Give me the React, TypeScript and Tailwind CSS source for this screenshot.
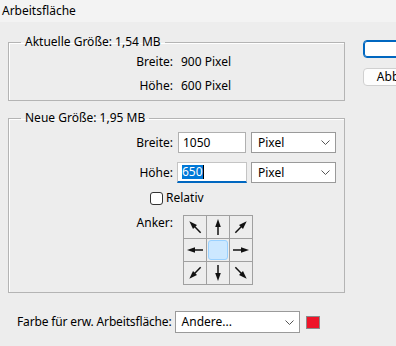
import React from "react";

const FONT = "font-['Noto_Sans',sans-serif]";

function Chevron() {
    return (
        <svg width="9" height="5" viewBox="0 0 9 5" className="shrink-0">
            <polyline points="0.5,0.5 4.5,4.5 8.5,0.5" fill="none" stroke="#555" strokeWidth="1" />
        </svg>
    );
}

function Select({ value, w }: { value: string; w: string }) {
    return (
        <div
            className={`${w} h-[21px] bg-white border border-[#9a9a9a] flex items-center justify-between pl-[6px] pr-[5px]`}
        >
            <span>{value}</span>
            <Chevron />
        </div>
    );
}

function Arrow({ rot }: { rot: number }) {
    return (
        <svg width="22" height="22" viewBox="0 0 22 22">
            <g transform={`rotate(${rot} 11 11)`}>
                <line x1="11" y1="19" x2="11" y2="9" stroke="#111" strokeWidth="1.5" />
                <polygon points="11,3 8.2,11 13.8,11" fill="#111" />
            </g>
        </svg>
    );
}

function AnchorGrid() {
    const rots: (number | null)[] = [-45, 0, 45, -90, null, 90, -135, 180, 135];
    return (
        <div className="grid grid-cols-[22px_22px_22px] grid-rows-[22px_22px_22px] gap-px p-px bg-[#a0a0a0] w-[70px]">
            {rots.map((r, i) =>
                r === null ? (
                    <div key={i} className="bg-[#ededed] p-px">
                        <div className="w-full h-full bg-[#cce8ff] border border-[#99d1ff] rounded-[3px]" />
                    </div>
                ) : (
                    <div key={i} className="bg-[#ededed] flex items-center justify-center">
                        <Arrow rot={r} />
                    </div>
                )
            )}
        </div>
    );
}

export default function App() {
    return (
        <div className={`w-[396px] h-[346px] overflow-hidden bg-[#ededed] text-[12px] leading-[16px] text-black ${FONT}`}>
            {/* Title */}
            <div className="h-[22px] bg-[#f3f3f3] flex items-center pl-[2px]">Arbeitsfläche</div>

            <div className="flex">
                <div className="w-[337px] ml-[8px] pt-[12px] shrink-0">
                    {/* Aktuelle Größe */}
                    <fieldset className="border border-[#b4b4b4] shadow-[inset_1px_1px_0_#fff] pb-[6px]">
                        <legend className="ml-[12px] px-[4px]">Aktuelle Größe: 1,54 MB</legend>
                        <div className="mt-[4px] flex flex-col gap-[8px]">
                            <div className="flex">
                                <span className="w-[164px] text-right">Breite:</span>
                                <span className="ml-[8px]">900 Pixel</span>
                            </div>
                            <div className="flex">
                                <span className="w-[164px] text-right">Höhe:</span>
                                <span className="ml-[8px]">600 Pixel</span>
                            </div>
                        </div>
                    </fieldset>

                    {/* Neue Größe */}
                    <fieldset className="mt-[9px] border border-[#b4b4b4] shadow-[inset_1px_1px_0_#fff] pb-[7px]">
                        <legend className="ml-[12px] px-[4px]">Neue Größe: 1,95 MB</legend>
                        <div className="mt-[6px] flex items-center">
                            <span className="w-[164px] text-right">Breite:</span>
                            <div className="ml-[5px] w-[68px] h-[21px] bg-white border border-[#b0b0b0] flex items-center pl-[4px]">
                                1050
                            </div>
                            <div className="ml-[5px]">
                                <Select value="Pixel" w="w-[85px]" />
                            </div>
                        </div>
                        <div className="mt-[9px] flex items-center">
                            <span className="w-[164px] text-right">Höhe:</span>
                            <div className="ml-[4px] w-[70px] h-[21px] bg-white border border-[#c4c4c4] border-b-2 border-b-[#0067c0] flex items-center pl-[4px]">
                                <span className="bg-[#0078d7] text-white leading-[14px]">650</span>
                                <span className="w-px h-[14px] bg-black" />
                            </div>
                            <div className="ml-[4px]">
                                <Select value="Pixel" w="w-[85px]" />
                            </div>
                        </div>
                        <div className="mt-[7px] flex items-center">
                            <span className="ml-[141px] w-[13px] h-[13px] bg-white border border-[#333] rounded-[3px]" />
                            <span className="ml-[3px]">Relativ</span>
                        </div>
                        <div className="mt-[9px] flex items-start">
                            <span className="w-[164px] text-right">Anker:</span>
                            <div className="ml-[10px]">
                                <AnchorGrid />
                            </div>
                        </div>
                    </fieldset>

                    {/* Farbe */}
                    <div className="mt-[18px] flex items-center">
                        <span className="ml-[9px] tracking-[-0.15px] whitespace-nowrap">Farbe für erw. Arbeitsfläche:</span>
                        <div className="ml-[3px] w-[125px] h-[22px] bg-white border border-[#9a9a9a] flex items-center justify-between pl-[6px] pr-[5px]">
                            <span>Andere...</span>
                            <Chevron />
                        </div>
                        <div className="ml-[6px] w-[14px] h-[13px] bg-[#ee1529] border border-[#8a8a8a]" />
                    </div>
                </div>

                {/* Buttons */}
                <div className="ml-[18px] pt-[18px] flex flex-col gap-[10px] shrink-0">
                    <button className="w-[89px] h-[18px] bg-white border border-[#0067c0] rounded-[4px] shadow-[inset_0_0_0_1px_#0067c0] leading-none">
                        OK
                    </button>
                    <button className="w-[89px] h-[18px] bg-[#fdfdfd] border border-[#d0d0d0] rounded-[4px] leading-none">
                        Abbrechen
                    </button>
                </div>
            </div>
        </div>
    );
}
